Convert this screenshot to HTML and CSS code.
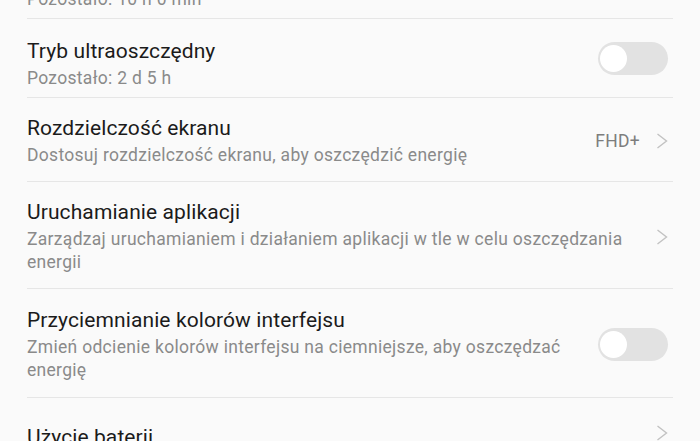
FILE: index.html
```html
<!DOCTYPE html>
<html lang="pl">
<head>
    <meta charset="UTF-8">
    <meta name="viewport" content="width=device-width, initial-scale=1.0">
    <title>Bateria</title>
    <link rel="stylesheet" href="styles.css">
</head>
<body>

    <div class="list">
        <!-- Battery saving modes -->
        <div class="row row-short">
            <div class="text">
                <div class="title">Tryb oszczędzania energii</div>
                <div class="sub">Pozostało: 10 h 0 min</div>
            </div>
            <span class="switch"></span>
        </div>

        <div class="row row-short">
            <div class="text">
                <div class="title">Tryb ultraoszczędny</div>
                <div class="sub">Pozostało: 2 d 5 h</div>
            </div>
            <span class="switch"></span>
        </div>

        <!-- Screen resolution -->
        <div class="row">
            <div class="text">
                <div class="title">Rozdzielczość ekranu</div>
                <div class="sub">Dostosuj rozdzielczość ekranu, aby oszczędzić energię</div>
            </div>
            <span class="value">FHD+</span>
            <svg class="chevron" width="12" height="16" viewBox="0 0 12 16">
                <polyline points="1.5,1 10.5,8 1.5,15" />
            </svg>
        </div>

        <div class="row">
            <div class="text">
                <div class="title">Uruchamianie aplikacji</div>
                <div class="sub">Zarządzaj uruchamianiem i działaniem aplikacji w tle w celu oszczędzania energii</div>
            </div>
            <svg class="chevron" width="12" height="16" viewBox="0 0 12 16">
                <polyline points="1.5,1 10.5,8 1.5,15" />
            </svg>
        </div>

        <div class="row row-tall">
            <div class="text">
                <div class="title">Przyciemnianie kolorów interfejsu</div>
                <div class="sub">Zmień odcienie kolorów interfejsu na ciemniejsze, aby oszczędzać energię</div>
            </div>
            <span class="switch"></span>
        </div>

        <div class="row row-single">
            <div class="text">
                <div class="title">Użycie baterii</div>
            </div>
            <svg class="chevron" width="12" height="16" viewBox="0 0 12 16">
                <polyline points="1.5,1 10.5,8 1.5,15" />
            </svg>
        </div>
    </div>

</body>
</html>
```

FILE: styles.css
```css
* {
    margin: 0;
    padding: 0;
    box-sizing: border-box;
}

body {
    font-family: 'Roboto', 'Noto Sans', sans-serif;
    background-color: #fafafa;
    color: #1b1b1b;
    overflow: hidden;
}

.list {
    margin-top: -60px;
    padding: 0 27px;
}

.row {
    display: flex;
    align-items: center;
    gap: 12px;
    padding: 17px 5px 14px 0;
    border-bottom: 1px solid #e6e6e6;
}

/* toggle rows at the top: switch centred on the row, text sits lower */
.row-short {
    padding-top: 7px;
    padding-bottom: 7px;
}

.row-short .text {
    padding-top: 12px;
}

.row-tall {
    padding-top: 18px;
    padding-bottom: 15px;
}

.row-single {
    padding-top: 26px;
    padding-bottom: 16px;
}

.row-single .chevron {
    align-self: flex-start;
    margin-top: 1px;
}

.text {
    flex: 1;
    min-width: 0;
}

.title {
    font-size: 21px;
    line-height: 26px;
    letter-spacing: 0.1px;
}

.sub {
    margin-top: 3px;
    font-size: 17.5px;
    line-height: 23px;
    letter-spacing: 0.3px;
    color: #8a8a8a;
}

.value {
    font-size: 17.5px;
    letter-spacing: 0.3px;
    color: #7d7d7d;
    margin-right: 4px;
}

.chevron {
    flex: none;
}

.chevron polyline {
    fill: none;
    stroke: #c2c2c2;
    stroke-width: 1.4;
}

.switch {
    position: relative;
    flex: none;
    width: 70px;
    height: 33px;
    margin-left: 10px;
    border-radius: 17px;
    background-color: #e2e2e2;
}

.switch::after {
    content: '';
    position: absolute;
    left: 2px;
    top: 3px;
    width: 27px;
    height: 27px;
    border-radius: 50%;
    background-color: #fff;
}
```
